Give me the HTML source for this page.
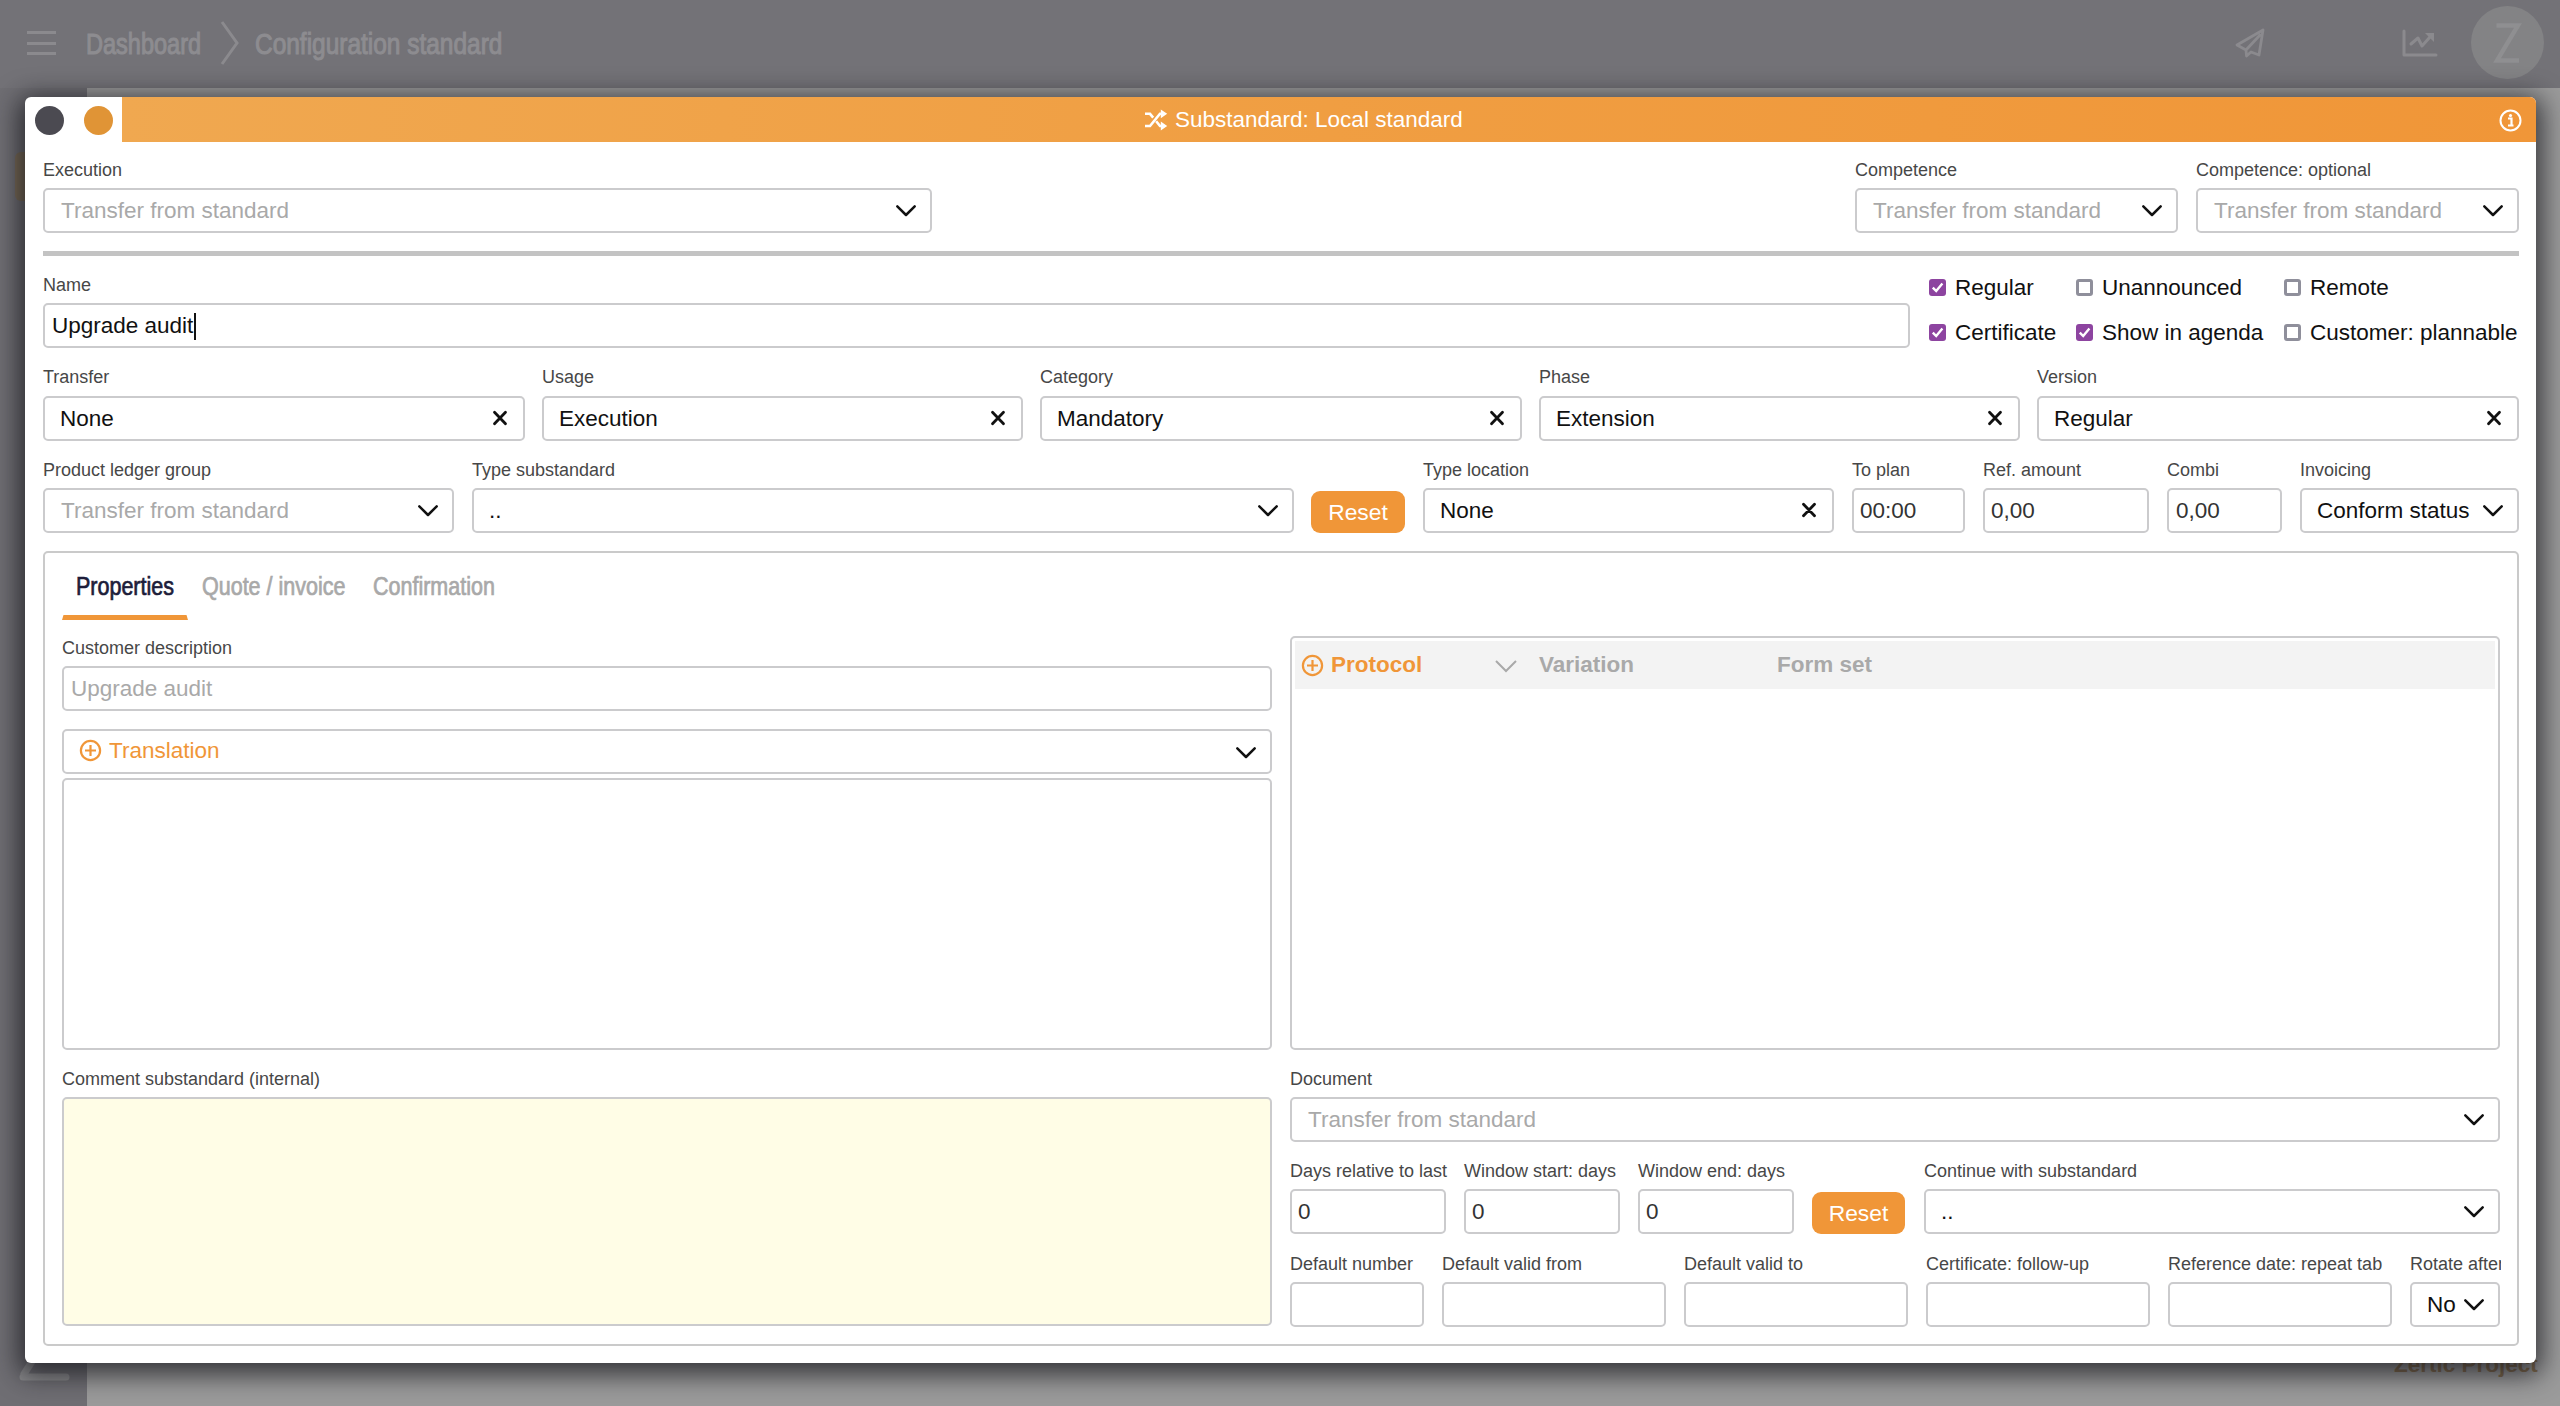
<!DOCTYPE html>
<html><head><meta charset="utf-8">
<style>
*{box-sizing:border-box;margin:0;padding:0}
html,body{width:2560px;height:1406px;overflow:hidden;background:#706f74;font-family:"Liberation Sans",sans-serif}
.a{position:absolute}
.crumb{color:#8d8c90;font-size:30px;top:27px;transform:scaleX(.784);transform-origin:left top;white-space:nowrap;-webkit-text-stroke:1.1px #8d8c90}
.lbl{font-size:18px;line-height:20px;color:#474747;white-space:nowrap}
.box{border:2px solid #cbcbcd;border-radius:5px;background:#fff}
.txt{font-size:22.5px;line-height:26px;white-space:nowrap}
.ph{color:#a9a9a9}
.dk{color:#111}
.or{color:#f09638}
.nm{color:#333}
.cb{width:17px;height:17px;border-radius:3px}
.cbon{background:#8d44a0}
.cboff{border:3px solid #8f8f9b;background:#fff}
.btn{background:#f09638;border-radius:9px;color:#fff;font-size:22.8px;line-height:43px;text-align:center}
.tab{font-size:25px;line-height:30px;transform:scaleX(.86);-webkit-text-stroke:.7px currentColor;transform-origin:left top;white-space:nowrap}
</style></head>
<body>

<div class="a" style="left:0;top:0;width:2560px;height:88px;background:#737277"></div>
<div class="a" style="left:0;top:88px;width:87px;height:1318px;background:#6f6e73"></div>
<div class="a" style="left:87px;top:88px;width:2473px;height:1318px;background:#9b9b9b"></div>
<div class="a" style="left:27px;top:31px;width:29px;height:3px;background:#8b8a8e"></div>
<div class="a" style="left:27px;top:42px;width:29px;height:3px;background:#8b8a8e"></div>
<div class="a" style="left:27px;top:52px;width:29px;height:3px;background:#8b8a8e"></div>
<div class="a crumb" style="left:86px">Dashboard</div>
<svg class="a" style="left:219px;top:20px" width="22" height="46" viewBox="0 0 22 46"><path d="M3 2 L18 23 L3 44" fill="none" stroke="#8b8a8e" stroke-width="3"/></svg>
<div class="a crumb" style="left:255px;transform:scaleX(.815)">Configuration standard</div>
<svg class="a" style="left:2230px;top:26px" width="40" height="36" viewBox="0 0 40 36"><path d="M33 4 L7 19 L16 24 L16.5 30 L21 26 L29 29 Z M16 24 L30 9" fill="none" stroke="#8b8a8e" stroke-width="2.8" stroke-linejoin="round" stroke-linecap="round"/></svg>
<svg class="a" style="left:2400px;top:26px" width="40" height="34" viewBox="0 0 40 34"><path d="M4 5 V29 H36" fill="none" stroke="#8b8a8e" stroke-width="3" stroke-linecap="round" stroke-linejoin="round"/><path d="M11 18 L18 12 L22 20 L30 11" fill="none" stroke="#8b8a8e" stroke-width="3" stroke-linecap="round" stroke-linejoin="round"/><path d="M25 7 H34 V16 Z" fill="#8b8a8e"/></svg>
<div class="a" style="left:2471px;top:6px;width:73px;height:73px;border-radius:50%;background:#838385"></div>
<svg class="a" style="left:2490px;top:20px" width="36" height="46" viewBox="0 0 36 46"><path d="M6.5 5.5 H28 L7 40.5 H29" fill="none" stroke="#8f8f91" stroke-width="4.4" stroke-linejoin="miter"/></svg>
<div class="a" style="left:2394px;top:1352px;font-size:22.5px;line-height:26px;color:#806a4c;font-weight:bold;white-space:nowrap">Zertic Project</div>
<div class="a" style="left:15px;top:152px;width:30px;height:49px;border-radius:6px;background:#7a6b56"></div>
<svg class="a" style="left:18px;top:1350px" width="52" height="34" viewBox="0 0 52 34"><path d="M20 2 L6 24 M5 27 H48" fill="none" stroke="#8a8a8c" stroke-width="7" stroke-linecap="round"/></svg>
<div class="a" style="left:25px;top:97px;width:2511px;height:1266px;background:#fff;border-radius:6px;box-shadow:0 6px 26px 6px rgba(20,20,25,.75)"></div>
<div class="a" style="left:122px;top:97px;width:2414px;height:45px;background:linear-gradient(90deg,#f0a850 0%,#f09e42 50%,#f09638 100%);border-top-right-radius:6px"></div>
<div class="a" style="left:35px;top:106px;width:29px;height:29px;border-radius:50%;background:#4b4a51"></div>
<div class="a" style="left:84px;top:106px;width:29px;height:29px;border-radius:50%;background:#e09436"></div>
<svg class="a" style="left:1144px;top:109px" width="24" height="22" viewBox="0 0 24 22"><path d="M1 4.8 H6 L9.2 8.6 M1 17 H6 L16 4.8 H18 M12.2 12.3 L16 17 H18" fill="none" stroke="#fff" stroke-width="2.6"/><path d="M16.8 0.4 L23.2 4.8 L16.8 9.2 Z M16.8 12.6 L23.2 17 L16.8 21.4 Z" fill="#fff"/></svg>
<div class="a" style="left:1175px;top:106px;font-size:22.5px;line-height:28px;color:#fff;white-space:nowrap">Substandard: Local standard</div>
<svg class="a" style="left:2499px;top:109px" width="23" height="23" viewBox="0 0 23 23"><circle cx="11.5" cy="11.5" r="10" fill="none" stroke="#fff" stroke-width="2"/><circle cx="11.5" cy="6.5" r="1.6" fill="#fff"/><path d="M9 9.5 L12.5 9.5 L12.5 16 M9 16.5 L14.5 16.5" stroke="#fff" stroke-width="2.2" fill="none"/></svg>
<div class="a lbl" style="left:43px;top:160px">Execution</div>
<div class="a box" style="left:43px;top:188px;width:889px;height:45px"></div>
<div class="a txt ph" style="left:61px;top:198px">Transfer from standard</div>
<svg class="a" style="left:894px;top:203px" width="24" height="16" viewBox="0 0 24 16"><path d="M3.3 3.3 L12 12 L20.7 3.3" fill="none" stroke="#111" stroke-width="2.5" stroke-linecap="round" stroke-linejoin="round"/></svg>
<div class="a lbl" style="left:1855px;top:160px">Competence</div>
<div class="a box" style="left:1855px;top:188px;width:323px;height:45px"></div>
<div class="a txt ph" style="left:1873px;top:198px">Transfer from standard</div>
<svg class="a" style="left:2140px;top:203px" width="24" height="16" viewBox="0 0 24 16"><path d="M3.3 3.3 L12 12 L20.7 3.3" fill="none" stroke="#111" stroke-width="2.5" stroke-linecap="round" stroke-linejoin="round"/></svg>
<div class="a lbl" style="left:2196px;top:160px">Competence: optional</div>
<div class="a box" style="left:2196px;top:188px;width:323px;height:45px"></div>
<div class="a txt ph" style="left:2214px;top:198px">Transfer from standard</div>
<svg class="a" style="left:2481px;top:203px" width="24" height="16" viewBox="0 0 24 16"><path d="M3.3 3.3 L12 12 L20.7 3.3" fill="none" stroke="#111" stroke-width="2.5" stroke-linecap="round" stroke-linejoin="round"/></svg>
<div class="a" style="left:43px;top:251px;width:2476px;height:5px;background:#c3c3c3"></div>
<div class="a lbl" style="left:43px;top:275px">Name</div>
<div class="a box" style="left:43px;top:303px;width:1867px;height:45px"></div>
<div class="a txt dk" style="left:52px;top:313px">Upgrade audit</div>
<div class="a" style="left:194px;top:313px;width:2px;height:27px;background:#111"></div>
<div class="a cb cbon" style="left:1929px;top:279px"><svg width="17" height="17" viewBox="0 0 17 17" style="display:block"><path d="M3.8 8.6 L7.2 12 L13.4 4.6" fill="none" stroke="#fff" stroke-width="2.4"/></svg></div>
<div class="a txt dk" style="left:1955px;top:275px">Regular</div>
<div class="a cb cboff" style="left:2076px;top:279px"></div>
<div class="a txt dk" style="left:2102px;top:275px">Unannounced</div>
<div class="a cb cboff" style="left:2284px;top:279px"></div>
<div class="a txt dk" style="left:2310px;top:275px">Remote</div>
<div class="a cb cbon" style="left:1929px;top:324px"><svg width="17" height="17" viewBox="0 0 17 17" style="display:block"><path d="M3.8 8.6 L7.2 12 L13.4 4.6" fill="none" stroke="#fff" stroke-width="2.4"/></svg></div>
<div class="a txt dk" style="left:1955px;top:320px">Certificate</div>
<div class="a cb cbon" style="left:2076px;top:324px"><svg width="17" height="17" viewBox="0 0 17 17" style="display:block"><path d="M3.8 8.6 L7.2 12 L13.4 4.6" fill="none" stroke="#fff" stroke-width="2.4"/></svg></div>
<div class="a txt dk" style="left:2102px;top:320px">Show in agenda</div>
<div class="a cb cboff" style="left:2284px;top:324px"></div>
<div class="a txt dk" style="left:2310px;top:320px">Customer: plannable</div>
<div class="a lbl" style="left:43px;top:367px">Transfer</div>
<div class="a box" style="left:43px;top:396px;width:482px;height:45px"></div>
<div class="a txt dk" style="left:60px;top:406px">None</div>
<svg class="a" style="left:490.5px;top:408.5px" width="18" height="18" viewBox="0 0 18 18"><path d="M3.5 3.3 L14.5 14.7 M14.5 3.3 L3.5 14.7" fill="none" stroke="#111" stroke-width="2.8" stroke-linecap="round"/></svg>
<div class="a lbl" style="left:542px;top:367px">Usage</div>
<div class="a box" style="left:542px;top:396px;width:481px;height:45px"></div>
<div class="a txt dk" style="left:559px;top:406px">Execution</div>
<svg class="a" style="left:988.5px;top:408.5px" width="18" height="18" viewBox="0 0 18 18"><path d="M3.5 3.3 L14.5 14.7 M14.5 3.3 L3.5 14.7" fill="none" stroke="#111" stroke-width="2.8" stroke-linecap="round"/></svg>
<div class="a lbl" style="left:1040px;top:367px">Category</div>
<div class="a box" style="left:1040px;top:396px;width:482px;height:45px"></div>
<div class="a txt dk" style="left:1057px;top:406px">Mandatory</div>
<svg class="a" style="left:1487.5px;top:408.5px" width="18" height="18" viewBox="0 0 18 18"><path d="M3.5 3.3 L14.5 14.7 M14.5 3.3 L3.5 14.7" fill="none" stroke="#111" stroke-width="2.8" stroke-linecap="round"/></svg>
<div class="a lbl" style="left:1539px;top:367px">Phase</div>
<div class="a box" style="left:1539px;top:396px;width:481px;height:45px"></div>
<div class="a txt dk" style="left:1556px;top:406px">Extension</div>
<svg class="a" style="left:1985.5px;top:408.5px" width="18" height="18" viewBox="0 0 18 18"><path d="M3.5 3.3 L14.5 14.7 M14.5 3.3 L3.5 14.7" fill="none" stroke="#111" stroke-width="2.8" stroke-linecap="round"/></svg>
<div class="a lbl" style="left:2037px;top:367px">Version</div>
<div class="a box" style="left:2037px;top:396px;width:482px;height:45px"></div>
<div class="a txt dk" style="left:2054px;top:406px">Regular</div>
<svg class="a" style="left:2484.5px;top:408.5px" width="18" height="18" viewBox="0 0 18 18"><path d="M3.5 3.3 L14.5 14.7 M14.5 3.3 L3.5 14.7" fill="none" stroke="#111" stroke-width="2.8" stroke-linecap="round"/></svg>
<div class="a lbl" style="left:43px;top:460px">Product ledger group</div>
<div class="a box" style="left:43px;top:488px;width:411px;height:45px"></div>
<div class="a txt ph" style="left:61px;top:498px">Transfer from standard</div>
<svg class="a" style="left:416px;top:503px" width="24" height="16" viewBox="0 0 24 16"><path d="M3.3 3.3 L12 12 L20.7 3.3" fill="none" stroke="#111" stroke-width="2.5" stroke-linecap="round" stroke-linejoin="round"/></svg>
<div class="a lbl" style="left:472px;top:460px">Type substandard</div>
<div class="a box" style="left:472px;top:488px;width:822px;height:45px"></div>
<div class="a txt dk" style="left:489px;top:498px">..</div>
<svg class="a" style="left:1256px;top:503px" width="24" height="16" viewBox="0 0 24 16"><path d="M3.3 3.3 L12 12 L20.7 3.3" fill="none" stroke="#111" stroke-width="2.5" stroke-linecap="round" stroke-linejoin="round"/></svg>
<div class="a btn" style="left:1311px;top:491px;width:94px;height:42px">Reset</div>
<div class="a lbl" style="left:1423px;top:460px">Type location</div>
<div class="a box" style="left:1423px;top:488px;width:411px;height:45px"></div>
<div class="a txt dk" style="left:1440px;top:498px">None</div>
<svg class="a" style="left:1799.5px;top:500.5px" width="18" height="18" viewBox="0 0 18 18"><path d="M3.5 3.3 L14.5 14.7 M14.5 3.3 L3.5 14.7" fill="none" stroke="#111" stroke-width="2.8" stroke-linecap="round"/></svg>
<div class="a lbl" style="left:1852px;top:460px">To plan</div>
<div class="a box" style="left:1852px;top:488px;width:113px;height:45px"></div>
<div class="a txt nm" style="left:1860px;top:498px">00:00</div>
<div class="a lbl" style="left:1983px;top:460px">Ref. amount</div>
<div class="a box" style="left:1983px;top:488px;width:166px;height:45px"></div>
<div class="a txt nm" style="left:1991px;top:498px">0,00</div>
<div class="a lbl" style="left:2167px;top:460px">Combi</div>
<div class="a box" style="left:2167px;top:488px;width:115px;height:45px"></div>
<div class="a txt nm" style="left:2176px;top:498px">0,00</div>
<div class="a lbl" style="left:2300px;top:460px">Invoicing</div>
<div class="a box" style="left:2300px;top:488px;width:219px;height:45px"></div>
<div class="a txt dk" style="left:2317px;top:498px">Conform status</div>
<svg class="a" style="left:2481px;top:503px" width="24" height="16" viewBox="0 0 24 16"><path d="M3.3 3.3 L12 12 L20.7 3.3" fill="none" stroke="#111" stroke-width="2.5" stroke-linecap="round" stroke-linejoin="round"/></svg>
<div class="a" style="left:43px;top:551px;width:2476px;height:795px;border:2px solid #cacaca;border-radius:5px"></div>
<div class="a tab" style="left:76px;top:571px;color:#1d1d3a">Properties</div>
<div class="a tab" style="left:202px;top:571px;color:#a9a9a9">Quote / invoice</div>
<div class="a tab" style="left:373px;top:571px;color:#a9a9a9">Confirmation</div>
<svg class="a" style="left:62px;top:615px" width="126" height="5" viewBox="0 0 126 5"><path d="M0 5 L1.5 0 H124.5 L126 5 Z" fill="#f09638"/></svg>
<div class="a lbl" style="left:62px;top:638px">Customer description</div>
<div class="a box" style="left:62px;top:666px;width:1210px;height:45px"></div>
<div class="a txt ph" style="left:71px;top:676px">Upgrade audit</div>
<div class="a box" style="left:62px;top:729px;width:1210px;height:45px"></div>
<svg class="a" style="left:79px;top:739px" width="23" height="23" viewBox="0 0 23 23"><circle cx="11.5" cy="11.5" r="9.6" fill="none" stroke="#f09638" stroke-width="2.2"/><path d="M11.5 6 V17 M6 11.5 H17" stroke="#f09638" stroke-width="2.2"/></svg>
<div class="a txt or" style="left:109px;top:738px">Translation</div>
<svg class="a" style="left:1234px;top:745px" width="24" height="16" viewBox="0 0 24 16"><path d="M3.3 3.3 L12 12 L20.7 3.3" fill="none" stroke="#111" stroke-width="2.5" stroke-linecap="round" stroke-linejoin="round"/></svg>
<div class="a box" style="left:62px;top:778px;width:1210px;height:272px"></div>
<div class="a box" style="left:1290px;top:636px;width:1210px;height:414px"></div>
<div class="a" style="left:1295px;top:641px;width:1200px;height:48px;background:#f3f3f3"></div>
<svg class="a" style="left:1301px;top:654px" width="23" height="23" viewBox="0 0 23 23"><circle cx="11.5" cy="11.5" r="9.6" fill="none" stroke="#f09638" stroke-width="2.2"/><path d="M11.5 6 V17 M6 11.5 H17" stroke="#f09638" stroke-width="2.2"/></svg>
<div class="a txt" style="left:1331px;top:652px;font-weight:bold;color:#f09638">Protocol</div>
<svg class="a" style="left:1494px;top:659px" width="24" height="14" viewBox="0 0 24 14"><path d="M2 2 L12 12 L22 2" fill="none" stroke="#a9a9a9" stroke-width="2"/></svg>
<div class="a txt" style="left:1539px;top:652px;font-weight:bold;color:#a9a9a9">Variation</div>
<div class="a txt" style="left:1777px;top:652px;font-weight:bold;color:#a9a9a9">Form set</div>
<div class="a lbl" style="left:62px;top:1069px">Comment substandard (internal)</div>
<div class="a box" style="left:62px;top:1097px;width:1210px;height:229px;background:#fffde6"></div>
<div class="a lbl" style="left:1290px;top:1069px">Document</div>
<div class="a box" style="left:1290px;top:1097px;width:1210px;height:45px"></div>
<div class="a txt ph" style="left:1308px;top:1107px">Transfer from standard</div>
<svg class="a" style="left:2462px;top:1112px" width="24" height="16" viewBox="0 0 24 16"><path d="M3.3 3.3 L12 12 L20.7 3.3" fill="none" stroke="#111" stroke-width="2.5" stroke-linecap="round" stroke-linejoin="round"/></svg>
<div class="a lbl" style="left:1290px;top:1161px">Days relative to last</div>
<div class="a box" style="left:1290px;top:1189px;width:156px;height:45px"></div>
<div class="a txt nm" style="left:1298px;top:1199px">0</div>
<div class="a lbl" style="left:1464px;top:1161px">Window start: days</div>
<div class="a box" style="left:1464px;top:1189px;width:156px;height:45px"></div>
<div class="a txt nm" style="left:1472px;top:1199px">0</div>
<div class="a lbl" style="left:1638px;top:1161px">Window end: days</div>
<div class="a box" style="left:1638px;top:1189px;width:156px;height:45px"></div>
<div class="a txt nm" style="left:1646px;top:1199px">0</div>
<div class="a btn" style="left:1812px;top:1192px;width:93px;height:42px">Reset</div>
<div class="a lbl" style="left:1924px;top:1161px">Continue with substandard</div>
<div class="a box" style="left:1924px;top:1189px;width:576px;height:45px"></div>
<div class="a txt dk" style="left:1941px;top:1199px">..</div>
<svg class="a" style="left:2462px;top:1204px" width="24" height="16" viewBox="0 0 24 16"><path d="M3.3 3.3 L12 12 L20.7 3.3" fill="none" stroke="#111" stroke-width="2.5" stroke-linecap="round" stroke-linejoin="round"/></svg>
<div class="a lbl" style="left:1290px;top:1254px">Default number</div>
<div class="a box" style="left:1290px;top:1282px;width:134px;height:45px"></div>
<div class="a lbl" style="left:1442px;top:1254px">Default valid from</div>
<div class="a box" style="left:1442px;top:1282px;width:224px;height:45px"></div>
<div class="a lbl" style="left:1684px;top:1254px">Default valid to</div>
<div class="a box" style="left:1684px;top:1282px;width:224px;height:45px"></div>
<div class="a lbl" style="left:1926px;top:1254px">Certificate: follow-up</div>
<div class="a box" style="left:1926px;top:1282px;width:224px;height:45px"></div>
<div class="a lbl" style="left:2168px;top:1254px">Reference date: repeat tab</div>
<div class="a box" style="left:2168px;top:1282px;width:224px;height:45px"></div>
<div class="a lbl" style="left:2410px;top:1254px;width:91px;overflow:hidden">Rotate after</div>
<div class="a box" style="left:2410px;top:1282px;width:90px;height:45px"></div>
<div class="a txt dk" style="left:2427px;top:1292px">No</div>
<svg class="a" style="left:2462px;top:1297px" width="24" height="16" viewBox="0 0 24 16"><path d="M3.3 3.3 L12 12 L20.7 3.3" fill="none" stroke="#111" stroke-width="2.5" stroke-linecap="round" stroke-linejoin="round"/></svg>
</body></html>
